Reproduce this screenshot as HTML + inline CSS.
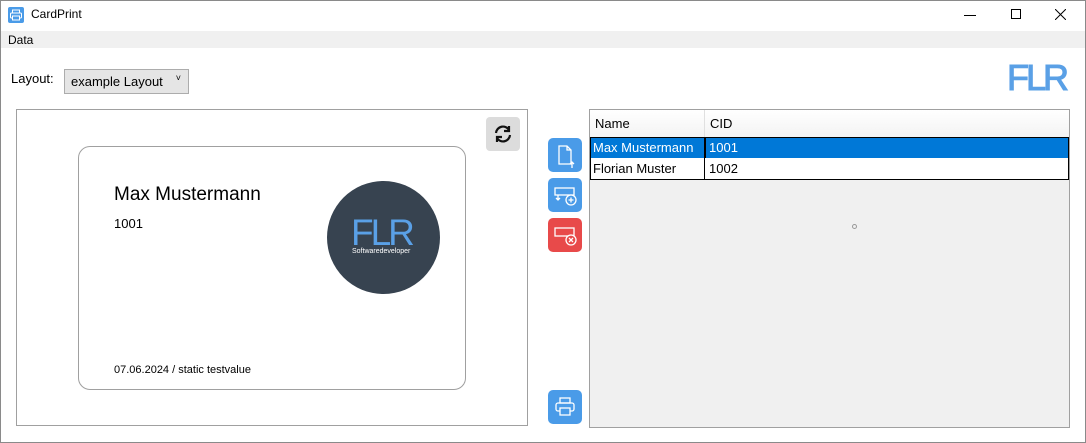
<!DOCTYPE html><html><head><style>
*{box-sizing:border-box;margin:0;padding:0}
body{width:1086px;height:443px;background:#fff;font-family:"Segoe UI","Liberation Sans",sans-serif;position:relative;overflow:hidden;font-size:12px;color:#000}
.a{position:absolute}
.btn{position:absolute;left:548px;width:34px;height:34px;border-radius:5px;background:#4a9be8}
</style></head><body>
<div class="a" style="left:0;top:0;width:1086px;height:443px;border:1px solid #8a8a8a;z-index:9"></div>
<svg class="a" style="left:8px;top:7px" width="16" height="16"><rect width="16" height="16" rx="2" fill="#4a9be8"/><rect x="4.5" y="3" width="7" height="3" fill="none" stroke="#fff"/><rect x="2.5" y="6" width="11" height="5" rx="1" fill="none" stroke="#fff"/><rect x="4.5" y="9" width="7" height="4" fill="#4a9be8" stroke="#fff"/></svg>
<div class="a" style="left:31px;top:7px;font-size:12px">CardPrint</div>
<div class="a" style="left:964px;top:15px;width:12px;border-top:1px solid #000"></div>
<div class="a" style="left:1011px;top:9px;width:10px;height:10px;border:1px solid #000"></div>
<svg class="a" style="left:1055px;top:9px" width="11" height="11" stroke="#000" stroke-width="1"><path d="M0 0L11 11M11 0L0 11"/></svg>
<div class="a" style="left:0;top:31px;width:1086px;height:17px;background:#f0f0f0"></div>
<div class="a" style="left:8px;top:33px;font-size:12px">Data</div>
<div class="a" style="left:11px;top:71px;font-size:13px">Layout:</div>
<div class="a" style="left:64px;top:69px;width:125px;height:25px;border:1px solid #acacac;background:#e5e5e5;font-size:13px;padding:4px 0 0 6px">example Layout<span style="position:absolute;right:7px;top:3px;font-size:9px">˅</span></div>
<div class="a" style="left:1007px;top:58px;font:36px 'Liberation Sans',sans-serif;color:#5aa0e6;letter-spacing:-3px;line-height:40px;-webkit-text-stroke:1px #5aa0e6">FLR</div>
<div class="a" style="left:16px;top:109px;width:512px;height:317px;border:1px solid #a0a0a0"></div>
<div class="a" style="left:486px;top:117px;width:34px;height:34px;border-radius:4px;background:#dcdcdc"></div>
<svg class="a" style="left:493px;top:124px" width="20" height="20" fill="none" stroke="#111" stroke-width="2.2"><path d="M3 9a7 7 0 0 1 13-3M17 11a7 7 0 0 1-13 3"/><path d="M16 2v5h-5M4 18v-5h5"/></svg>
<div class="a" style="left:78px;top:146px;width:388px;height:244px;border:1px solid #a0a0a0;border-radius:12px"></div>
<div class="a" style="left:114px;top:184px;font-size:19px">Max Mustermann</div>
<div class="a" style="left:114px;top:216px;font-size:13px">1001</div>
<div class="a" style="left:114px;top:364px;font-size:11px">07.06.2024 / static testvalue</div>
<div class="a" style="left:327px;top:181px;width:113px;height:113px;border-radius:50%;background:#374350"></div>
<div class="a" style="left:351px;top:213px;font:37px 'Liberation Sans',sans-serif;color:#5aa0e6;letter-spacing:-3px;line-height:40px">FLR</div>
<div class="a" style="left:352px;top:248px;font-size:7px;color:#fff">Softwaredeveloper</div>
<div class="btn" style="top:138px"></div>
<svg class="a" style="left:548px;top:138px" width="34" height="34" fill="none" stroke="#fff" stroke-width="1.3"><path d="M11 8h8l4 4v14H11z M19 8v4h4"/><path d="M24 30v-6M22 26l2-2 2 2"/></svg>
<div class="btn" style="top:178px"></div>
<svg class="a" style="left:548px;top:178px" width="34" height="34" fill="none" stroke="#fff" stroke-width="1.3"><rect x="7" y="10" width="19" height="7"/><path d="M10 17v5M8 20l2 2 2-2"/><circle cx="23" cy="22" r="5" fill="#4a9be8"/><path d="M23 19.5v5M20.5 22h5"/></svg>
<div class="btn" style="top:218px;background:#e84a4a"></div>
<svg class="a" style="left:548px;top:218px" width="34" height="34" fill="none" stroke="#fff" stroke-width="1.3"><rect x="7" y="10" width="19" height="8"/><circle cx="23" cy="22" r="5" fill="#e84a4a"/><path d="M21 20l4 4M25 20l-4 4"/></svg>
<div class="btn" style="top:390px"></div>
<svg class="a" style="left:548px;top:390px" width="34" height="34" fill="none" stroke="#fff" stroke-width="1.3"><rect x="12" y="8" width="10" height="5"/><rect x="8" y="13" width="18" height="8" rx="2"/><rect x="12" y="18" width="10" height="7" fill="#4a9be8"/></svg>
<div class="a" style="left:589px;top:109px;width:481px;height:319px;border:1px solid #a0a0a0;background:#f0f0f0"></div>
<div class="a" style="left:590px;top:110px;width:479px;height:27px;background:linear-gradient(#fff,#f3f3f3)"></div>
<div class="a" style="left:704px;top:110px;height:27px;border-left:1px solid #e0e0e0"></div>
<div class="a" style="left:595px;top:116px;font-size:13px">Name</div>
<div class="a" style="left:710px;top:116px;font-size:13px">CID</div>
<div class="a" style="left:590px;top:137px;width:479px;height:22px;background:#0078d7;border:1px solid #000"></div>
<div class="a" style="left:704px;top:137px;height:22px;border-left:2px solid #000"></div>
<div class="a" style="left:593px;top:140px;font-size:13px;color:#fff">Max Mustermann</div>
<div class="a" style="left:709px;top:140px;font-size:13px;color:#fff">1001</div>
<div class="a" style="left:590px;top:158px;width:479px;height:22px;background:#fff;border:1px solid #000;border-top:none"></div>
<div class="a" style="left:704px;top:158px;height:22px;border-left:1px solid #000"></div>
<div class="a" style="left:593px;top:161px;font-size:13px">Florian Muster</div>
<div class="a" style="left:709px;top:161px;font-size:13px">1002</div>
<div class="a" style="left:852px;top:224px;width:5px;height:5px;border:1px solid #999;border-radius:50%"></div>
</body></html>
